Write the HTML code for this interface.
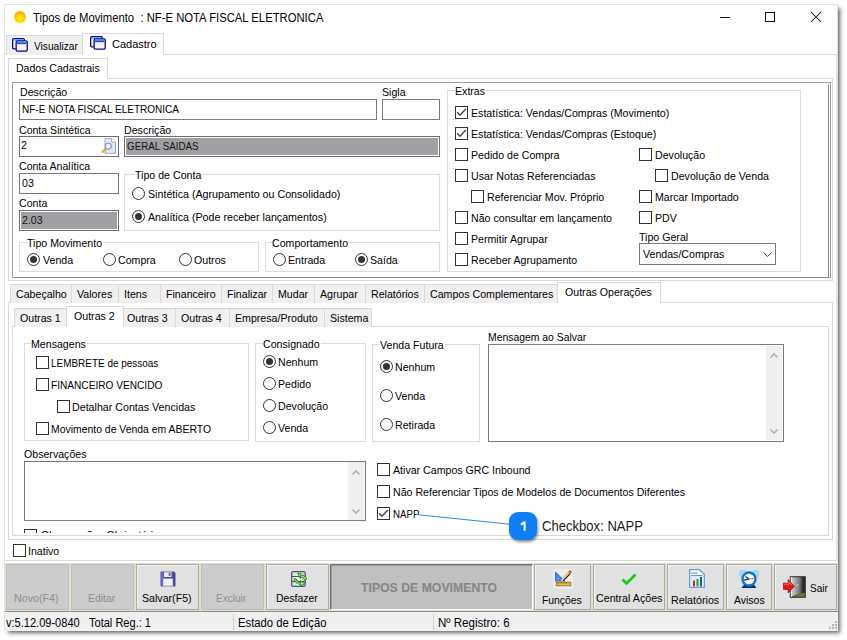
<!DOCTYPE html>
<html><head><meta charset="utf-8"><style>
*{margin:0;padding:0;box-sizing:border-box}
html,body{width:847px;height:640px;overflow:hidden;background:#fff}
body{position:relative;font-family:"Liberation Sans",sans-serif;color:#000}
.a{position:absolute}
.t{position:absolute;white-space:pre;font-size:12px;line-height:12px;transform-origin:0 0;color:#000}
.cb{position:absolute;width:13px;height:13px;border:1px solid #333;background:#fff}
.rb{position:absolute;width:13px;height:13px;border:1px solid #333;border-radius:50%;background:#fff}
.rb.on::after{content:"";position:absolute;left:2px;top:2px;width:7px;height:7px;border-radius:50%;background:#333}
</style></head><body>
<div class="a" style="left:4px;top:4px;width:834px;height:627px;border:1px solid #e2e2e2;background:#fff;box-shadow:3px 3px 4px -1px rgba(0,0,0,0.6);"></div>
<div class="a" style="left:14px;top:11px;width:12px;height:12px;border-radius:50%;background:radial-gradient(circle at 50% 65%,#fff200 0,#ffd000 40%,#ffa000 90%);"></div>
<div class="t" style="left:33px;top:12px;font-size:12px;line-height:12px;transform:scaleX(0.94);">Tipos de Movimento  : NF-E NOTA FISCAL ELETRONICA</div>
<div class="a" style="left:720px;top:17px;width:10px;height:1px;background:#111;"></div>
<div class="a" style="left:765px;top:12px;width:10px;height:10px;border:1px solid #111;"></div>
<svg class="a" style="left:810px;top:11px" width="12" height="12"><path d="M1 1 L11 11 M11 1 L1 11" stroke="#111" stroke-width="1.05"/></svg>
<div class="a" style="left:5px;top:54px;width:832px;height:1px;background:#d9d9d9;"></div>
<div class="a" style="left:836px;top:54px;width:1px;height:507px;background:#e3e3e3;"></div>
<div class="a" style="left:6px;top:35px;width:77px;height:20px;background:#f0f0f0;border:1px solid #d9d9d9;border-bottom:none;"></div>
<div class="a" style="left:82px;top:33px;width:82px;height:22px;background:#fff;border:1px solid #d9d9d9;border-bottom:none;"></div>
<div class="a" style="left:11px;top:37px"><svg width="18" height="16" viewBox="0 0 18 16"><rect x="1.65" y="1.65" width="11.7" height="10.3" rx="1.2" fill="#f4f4f4" stroke="#0a0a8a" stroke-width="1.3"/><rect x="2.4" y="2.4" width="10.2" height="1.4" fill="#4fa8ff"/><rect x="5.15" y="3.85" width="11.1" height="10.2" rx="1.2" fill="#f2f2f2" stroke="#0a0a8a" stroke-width="1.3"/><rect x="5.9" y="4.6" width="9.6" height="1.8" fill="#3a8cf5"/><rect x="5.9" y="6.3" width="9.6" height="0.8" fill="#0a0a8a"/></svg></div>
<div class="a" style="left:89px;top:35px"><svg width="18" height="16" viewBox="0 0 18 16"><rect x="1.65" y="1.65" width="11.7" height="10.3" rx="1.2" fill="#f4f4f4" stroke="#0a0a8a" stroke-width="1.3"/><rect x="2.4" y="2.4" width="10.2" height="1.4" fill="#4fa8ff"/><rect x="5.15" y="3.85" width="11.1" height="10.2" rx="1.2" fill="#f2f2f2" stroke="#0a0a8a" stroke-width="1.3"/><rect x="5.9" y="4.6" width="9.6" height="1.8" fill="#3a8cf5"/><rect x="5.9" y="6.3" width="9.6" height="0.8" fill="#0a0a8a"/></svg></div>
<div class="t" style="left:33.9px;top:41px;font-size:11px;line-height:11px;transform:scaleX(0.922);">Visualizar</div>
<div class="t" style="left:112px;top:39px;font-size:11px;line-height:11px;">Cadastro</div>
<div class="a" style="left:8px;top:78px;width:825px;height:203px;border:1px solid #d9d9d9;"></div>
<div class="a" style="left:8px;top:58px;width:100px;height:21px;background:#fff;border:1px solid #d9d9d9;border-bottom:none;"></div>
<div class="t" style="left:15.5px;top:63px;font-size:11px;line-height:11px;transform:scaleX(0.957);">Dados Cadastrais</div>
<div class="a" style="left:12px;top:82px;width:819px;height:196px;border:1px solid #a0a0a0;border-right-color:#a0a0a0;"></div>
<div class="a" style="left:828px;top:84px;width:1px;height:193px;background:#8a8a8a;"></div>
<div class="a" style="left:14px;top:277px;width:815px;height:1px;background:#8a8a8a;"></div>
<div class="t" style="left:19.5px;top:87px;font-size:11px;line-height:11px;transform:scaleX(0.965);">Descrição</div>
<div class="a" style="left:19px;top:99px;width:358px;height:21px;border:1px solid #7a7a7a;background:#fff;"></div>
<div class="t" style="left:22px;top:104px;font-size:11px;line-height:11px;transform:scaleX(0.911);">NF-E NOTA FISCAL ELETRONICA</div>
<div class="t" style="left:382px;top:87px;font-size:11px;line-height:11px;transform:scaleX(0.965);">Sigla</div>
<div class="a" style="left:382px;top:99px;width:58px;height:21px;border:1px solid #7a7a7a;background:#fff;"></div>
<div class="t" style="left:19px;top:125px;font-size:11px;line-height:11px;transform:scaleX(0.96);">Conta Sintética</div>
<div class="a" style="left:19px;top:136px;width:100px;height:21px;border:1px solid #6d6d6d;background:#fff;"></div>
<div class="t" style="left:21.2px;top:140px;font-size:11px;line-height:11px;transform:scaleX(0.965);">2</div>
<div class="a" style="left:100px;top:136px"><svg width="18" height="18" viewBox="0 0 18 18"><path d="M5 2.5 H11.5 L15.5 6 V17.3 H5 Z" fill="#dde9fb" stroke="#9a9ac8" stroke-width="0.9"/><path d="M11.5 2.5 V6 H15.5" fill="#fff" stroke="#9a9ac8" stroke-width="0.8"/><circle cx="8.3" cy="10.2" r="3" fill="#e4f6ff" stroke="#8c8cc8" stroke-width="1.1"/><path d="M6.2 12.5 L2.5 16" stroke="#f0a020" stroke-width="2" stroke-linecap="round"/></svg></div>
<div class="t" style="left:124px;top:125px;font-size:11px;line-height:11px;transform:scaleX(0.965);">Descrição</div>
<div class="a" style="left:124px;top:136px;width:316px;height:21px;background:#a0a0a4;border:1px solid #6d6d6d;box-shadow:inset 0 0 0 1px #fff;"></div>
<div class="t" style="left:126.8px;top:141px;font-size:11px;line-height:11px;transform:scaleX(0.892);color:#111;">GERAL SAIDAS</div>
<div class="t" style="left:19px;top:161px;font-size:11px;line-height:11px;transform:scaleX(0.96);">Conta Analítica</div>
<div class="a" style="left:19px;top:173px;width:100px;height:21px;border:1px solid #7a7a7a;background:#fff;"></div>
<div class="t" style="left:22px;top:178px;font-size:11px;line-height:11px;transform:scaleX(0.965);">03</div>
<div class="t" style="left:19px;top:198px;font-size:11px;line-height:11px;transform:scaleX(0.965);">Conta</div>
<div class="a" style="left:19px;top:210px;width:100px;height:21px;background:#a0a0a4;border:1px solid #6d6d6d;box-shadow:inset 0 0 0 1px #fff;"></div>
<div class="t" style="left:22px;top:215px;font-size:11px;line-height:11px;transform:scaleX(0.965);color:#111;">2.03</div>
<div class="a" style="left:124px;top:174px;width:316px;height:57px;border:1px solid #dcdcdc;"></div>
<div class="t" style="left:134.5px;top:170px;font-size:11px;line-height:11px;transform:scaleX(0.965);background:#fff;padding-right:1px;">Tipo de Conta</div>
<div class="rb" style="left:132.0px;top:187.0px"></div>
<div class="t" style="left:147.5px;top:189px;font-size:11px;line-height:11px;transform:scaleX(0.971);">Sintética (Agrupamento ou Consolidado)</div>
<div class="rb on" style="left:132.0px;top:210.0px"></div>
<div class="t" style="left:147.5px;top:212px;font-size:11px;line-height:11px;transform:scaleX(0.971);">Analítica (Pode receber lançamentos)</div>
<div class="a" style="left:19px;top:242px;width:240px;height:30px;border:1px solid #dcdcdc;"></div>
<div class="t" style="left:26.5px;top:238px;font-size:11px;line-height:11px;transform:scaleX(0.965);background:#fff;padding-right:1px;">Tipo Movimento</div>
<div class="rb on" style="left:27.0px;top:253.0px"></div>
<div class="t" style="left:43px;top:255px;font-size:11px;line-height:11px;transform:scaleX(0.965);">Venda</div>
<div class="rb" style="left:102.5px;top:253.0px"></div>
<div class="t" style="left:118px;top:255px;font-size:11px;line-height:11px;transform:scaleX(0.965);">Compra</div>
<div class="rb" style="left:178.5px;top:253.0px"></div>
<div class="t" style="left:194px;top:255px;font-size:11px;line-height:11px;transform:scaleX(0.965);">Outros</div>
<div class="a" style="left:265px;top:242px;width:175px;height:30px;border:1px solid #dcdcdc;"></div>
<div class="t" style="left:272px;top:238px;font-size:11px;line-height:11px;transform:scaleX(0.965);background:#fff;padding-right:1px;">Comportamento</div>
<div class="rb" style="left:272.5px;top:253.0px"></div>
<div class="t" style="left:288px;top:255px;font-size:11px;line-height:11px;transform:scaleX(0.965);">Entrada</div>
<div class="rb on" style="left:355.0px;top:253.0px"></div>
<div class="t" style="left:370px;top:255px;font-size:11px;line-height:11px;transform:scaleX(0.965);">Saída</div>
<div class="a" style="left:447px;top:90px;width:354px;height:182px;border:1px solid #dcdcdc;"></div>
<div class="t" style="left:455px;top:86px;font-size:11px;line-height:11px;transform:scaleX(0.965);background:#fff;padding-right:1px;">Extras</div>
<div class="cb" style="left:455px;top:106px"><svg width="11" height="11" style="position:absolute;left:0;top:0"><path d="M1.2 5.2 L4 8.2 L9.8 2" fill="none" stroke="#444" stroke-width="1.4"/></svg></div>
<div class="t" style="left:470.5px;top:108px;font-size:11px;line-height:11px;transform:scaleX(0.965);">Estatística: Vendas/Compras (Movimento)</div>
<div class="cb" style="left:455px;top:127px"><svg width="11" height="11" style="position:absolute;left:0;top:0"><path d="M1.2 5.2 L4 8.2 L9.8 2" fill="none" stroke="#444" stroke-width="1.4"/></svg></div>
<div class="t" style="left:470.5px;top:129px;font-size:11px;line-height:11px;transform:scaleX(0.965);">Estatística: Vendas/Compras (Estoque)</div>
<div class="cb" style="left:455px;top:148px"></div>
<div class="t" style="left:470.5px;top:150px;font-size:11px;line-height:11px;transform:scaleX(0.965);">Pedido de Compra</div>
<div class="cb" style="left:455px;top:169px"></div>
<div class="t" style="left:470.5px;top:171px;font-size:11px;line-height:11px;transform:scaleX(0.965);">Usar Notas Referenciadas</div>
<div class="cb" style="left:471px;top:190px"></div>
<div class="t" style="left:486.5px;top:192px;font-size:11px;line-height:11px;transform:scaleX(0.965);">Referenciar Mov. Próprio</div>
<div class="cb" style="left:455px;top:211px"></div>
<div class="t" style="left:470.5px;top:213px;font-size:11px;line-height:11px;transform:scaleX(0.965);">Não consultar em lançamento</div>
<div class="cb" style="left:455px;top:232px"></div>
<div class="t" style="left:470.5px;top:234px;font-size:11px;line-height:11px;transform:scaleX(0.965);">Permitir Agrupar</div>
<div class="cb" style="left:455px;top:253px"></div>
<div class="t" style="left:470.5px;top:255px;font-size:11px;line-height:11px;transform:scaleX(0.965);">Receber Agrupamento</div>
<div class="cb" style="left:639px;top:148px"></div>
<div class="t" style="left:654.5px;top:150px;font-size:11px;line-height:11px;transform:scaleX(0.965);">Devolução</div>
<div class="cb" style="left:655px;top:169px"></div>
<div class="t" style="left:670.5px;top:171px;font-size:11px;line-height:11px;transform:scaleX(0.965);">Devolução de Venda</div>
<div class="cb" style="left:639px;top:190px"></div>
<div class="t" style="left:654.5px;top:192px;font-size:11px;line-height:11px;transform:scaleX(0.965);">Marcar Importado</div>
<div class="cb" style="left:639px;top:211px"></div>
<div class="t" style="left:654.5px;top:213px;font-size:11px;line-height:11px;transform:scaleX(0.965);">PDV</div>
<div class="t" style="left:639px;top:232px;font-size:11px;line-height:11px;transform:scaleX(0.965);">Tipo Geral</div>
<div class="a" style="left:639px;top:243px;width:137px;height:22px;border:1px solid #7a7a7a;background:#fff;"></div>
<div class="t" style="left:643px;top:249px;font-size:11px;line-height:11px;transform:scaleX(0.965);">Vendas/Compras</div>
<svg class="a" style="left:763px;top:252px" width="9" height="6"><path d="M0.5 0.5 L4.5 4.5 L8.5 0.5" fill="none" stroke="#444" stroke-width="1"/></svg>
<div class="a" style="left:8px;top:302px;width:825px;height:238px;border:1px solid #d9d9d9;"></div>
<div class="a" style="left:10px;top:284px;width:62px;height:19px;background:#f0f0f0;border:1px solid #d9d9d9;border-bottom:none;"></div>
<div class="a" style="left:71px;top:284px;width:48px;height:19px;background:#f0f0f0;border:1px solid #d9d9d9;border-bottom:none;"></div>
<div class="a" style="left:118px;top:284px;width:43px;height:19px;background:#f0f0f0;border:1px solid #d9d9d9;border-bottom:none;"></div>
<div class="a" style="left:160px;top:284px;width:62px;height:19px;background:#f0f0f0;border:1px solid #d9d9d9;border-bottom:none;"></div>
<div class="a" style="left:221px;top:284px;width:52px;height:19px;background:#f0f0f0;border:1px solid #d9d9d9;border-bottom:none;"></div>
<div class="a" style="left:272px;top:284px;width:43px;height:19px;background:#f0f0f0;border:1px solid #d9d9d9;border-bottom:none;"></div>
<div class="a" style="left:314px;top:284px;width:52px;height:19px;background:#f0f0f0;border:1px solid #d9d9d9;border-bottom:none;"></div>
<div class="a" style="left:365px;top:284px;width:60px;height:19px;background:#f0f0f0;border:1px solid #d9d9d9;border-bottom:none;"></div>
<div class="a" style="left:424px;top:284px;width:134px;height:19px;background:#f0f0f0;border:1px solid #d9d9d9;border-bottom:none;"></div>
<div class="t" style="left:16px;top:289px;font-size:11px;line-height:11px;transform:scaleX(0.965);">Cabeçalho</div>
<div class="t" style="left:77px;top:289px;font-size:11px;line-height:11px;transform:scaleX(0.965);">Valores</div>
<div class="t" style="left:124px;top:289px;font-size:11px;line-height:11px;transform:scaleX(0.965);">Itens</div>
<div class="t" style="left:166px;top:289px;font-size:11px;line-height:11px;transform:scaleX(0.965);">Financeiro</div>
<div class="t" style="left:227px;top:289px;font-size:11px;line-height:11px;transform:scaleX(0.965);">Finalizar</div>
<div class="t" style="left:278px;top:289px;font-size:11px;line-height:11px;transform:scaleX(0.965);">Mudar</div>
<div class="t" style="left:320px;top:289px;font-size:11px;line-height:11px;transform:scaleX(0.965);">Agrupar</div>
<div class="t" style="left:371px;top:289px;font-size:11px;line-height:11px;transform:scaleX(0.965);">Relatórios</div>
<div class="t" style="left:430px;top:289px;font-size:11px;line-height:11px;transform:scaleX(0.965);">Campos Complementares</div>
<div class="a" style="left:557px;top:282px;width:104px;height:21px;background:#fff;border:1px solid #d9d9d9;border-bottom:none;"></div>
<div class="t" style="left:564.5px;top:287px;font-size:11px;line-height:11px;transform:scaleX(0.965);">Outras Operações</div>
<div class="a" style="left:12px;top:326px;width:817px;height:210px;border:1px solid #d9d9d9;"></div>
<div class="a" style="left:14px;top:308px;width:53px;height:19px;background:#f0f0f0;border:1px solid #d9d9d9;border-bottom:none;"></div>
<div class="t" style="left:19.5px;top:313px;font-size:11px;line-height:11px;transform:scaleX(0.965);">Outras 1</div>
<div class="a" style="left:121px;top:308px;width:55px;height:19px;background:#f0f0f0;border:1px solid #d9d9d9;border-bottom:none;"></div>
<div class="t" style="left:127px;top:313px;font-size:11px;line-height:11px;transform:scaleX(0.965);">Outras 3</div>
<div class="a" style="left:175px;top:308px;width:55px;height:19px;background:#f0f0f0;border:1px solid #d9d9d9;border-bottom:none;"></div>
<div class="t" style="left:181px;top:313px;font-size:11px;line-height:11px;transform:scaleX(0.965);">Outras 4</div>
<div class="a" style="left:229px;top:308px;width:96px;height:19px;background:#f0f0f0;border:1px solid #d9d9d9;border-bottom:none;"></div>
<div class="t" style="left:235px;top:313px;font-size:11px;line-height:11px;transform:scaleX(0.965);">Empresa/Produto</div>
<div class="a" style="left:324px;top:308px;width:48px;height:19px;background:#f0f0f0;border:1px solid #d9d9d9;border-bottom:none;"></div>
<div class="t" style="left:330px;top:313px;font-size:11px;line-height:11px;transform:scaleX(0.965);">Sistema</div>
<div class="a" style="left:66px;top:306px;width:58px;height:21px;background:#fff;border:1px solid #d9d9d9;border-bottom:none;"></div>
<div class="t" style="left:74px;top:311px;font-size:11px;line-height:11px;transform:scaleX(0.965);">Outras 2</div>
<div class="a" style="left:24px;top:343px;width:225px;height:98px;border:1px solid #dcdcdc;"></div>
<div class="t" style="left:31px;top:339px;font-size:11px;line-height:11px;transform:scaleX(0.965);background:#fff;padding-right:1px;">Mensagens</div>
<div class="cb" style="left:36px;top:356px"></div>
<div class="t" style="left:50.8px;top:358px;font-size:11px;line-height:11px;transform:scaleX(0.905);">LEMBRETE de pessoas</div>
<div class="cb" style="left:36px;top:378px"></div>
<div class="t" style="left:50.8px;top:380px;font-size:11px;line-height:11px;transform:scaleX(0.92);">FINANCEIRO VENCIDO</div>
<div class="cb" style="left:57px;top:400px"></div>
<div class="t" style="left:71.8px;top:402px;font-size:11px;line-height:11px;transform:scaleX(0.97);">Detalhar Contas Vencidas</div>
<div class="cb" style="left:36px;top:422px"></div>
<div class="t" style="left:50.8px;top:424px;font-size:11px;line-height:11px;transform:scaleX(0.947);">Movimento de Venda em ABERTO</div>
<div class="a" style="left:255px;top:343px;width:111px;height:99px;border:1px solid #dcdcdc;"></div>
<div class="t" style="left:263px;top:339px;font-size:11px;line-height:11px;transform:scaleX(0.965);background:#fff;padding-right:1px;">Consignado</div>
<div class="rb on" style="left:263.0px;top:355.0px"></div>
<div class="t" style="left:277.7px;top:357px;font-size:11px;line-height:11px;transform:scaleX(0.965);">Nenhum</div>
<div class="rb" style="left:263.0px;top:377.0px"></div>
<div class="t" style="left:277.7px;top:379px;font-size:11px;line-height:11px;transform:scaleX(0.965);">Pedido</div>
<div class="rb" style="left:263.0px;top:399.0px"></div>
<div class="t" style="left:277.7px;top:401px;font-size:11px;line-height:11px;transform:scaleX(0.965);">Devolução</div>
<div class="rb" style="left:263.0px;top:421.0px"></div>
<div class="t" style="left:277.7px;top:423px;font-size:11px;line-height:11px;transform:scaleX(0.965);">Venda</div>
<div class="a" style="left:372px;top:344px;width:108px;height:98px;border:1px solid #dcdcdc;"></div>
<div class="t" style="left:380px;top:340px;font-size:11px;line-height:11px;transform:scaleX(0.965);background:#fff;padding-right:1px;">Venda Futura</div>
<div class="rb on" style="left:380.0px;top:360.0px"></div>
<div class="t" style="left:395px;top:362px;font-size:11px;line-height:11px;transform:scaleX(0.965);">Nenhum</div>
<div class="rb" style="left:380.0px;top:389.0px"></div>
<div class="t" style="left:395px;top:391px;font-size:11px;line-height:11px;transform:scaleX(0.965);">Venda</div>
<div class="rb" style="left:380.0px;top:418.0px"></div>
<div class="t" style="left:395px;top:420px;font-size:11px;line-height:11px;transform:scaleX(0.965);">Retirada</div>
<div class="t" style="left:487.8px;top:332px;font-size:11px;line-height:11px;transform:scaleX(0.945);">Mensagem ao Salvar</div>
<div class="a" style="left:488px;top:344px;width:296px;height:98px;border:1px solid #7a7a7a;background:#fff;"></div>
<div class="a" style="left:766px;top:346px;width:16px;height:94px;background:#f0f0f0;"></div>
<svg class="a" style="left:770px;top:353px" width="8" height="5"><path d="M0.5 4.5 L4 1 L7.5 4.5" fill="none" stroke="#b0b0b0" stroke-width="1.6"/></svg>
<svg class="a" style="left:770px;top:429px" width="8" height="5"><path d="M0.5 0.5 L4 4 L7.5 0.5" fill="none" stroke="#b0b0b0" stroke-width="1.6"/></svg>
<div class="t" style="left:24px;top:449px;font-size:11px;line-height:11px;transform:scaleX(0.965);">Observações</div>
<div class="a" style="left:24px;top:461px;width:342px;height:60px;border:1px solid #7a7a7a;background:#fff;"></div>
<div class="a" style="left:348px;top:462px;width:16px;height:58px;background:#f0f0f0;"></div>
<svg class="a" style="left:352px;top:470px" width="8" height="5"><path d="M0.5 4.5 L4 1 L7.5 4.5" fill="none" stroke="#b0b0b0" stroke-width="1.6"/></svg>
<svg class="a" style="left:352px;top:509px" width="8" height="5"><path d="M0.5 0.5 L4 4 L7.5 0.5" fill="none" stroke="#b0b0b0" stroke-width="1.6"/></svg>
<div class="cb" style="left:377px;top:463px"></div>
<div class="t" style="left:392.5px;top:465px;font-size:11px;line-height:11px;transform:scaleX(0.965);">Ativar Campos GRC Inbound</div>
<div class="cb" style="left:377px;top:485px"></div>
<div class="t" style="left:392.5px;top:487px;font-size:11px;line-height:11px;transform:scaleX(0.965);">Não Referenciar Tipos de Modelos de Documentos Diferentes</div>
<div class="cb" style="left:377px;top:507px"><svg width="11" height="11" style="position:absolute;left:0;top:0"><path d="M1.2 5.2 L4 8.2 L9.8 2" fill="none" stroke="#444" stroke-width="1.4"/></svg></div>
<div class="t" style="left:392.5px;top:509px;font-size:11px;line-height:11px;transform:scaleX(0.88);">NAPP</div>
<div class="a" style="left:13px;top:520px;width:815px;height:13px;overflow:hidden"><div class="cb" style="left:11px;top:9px"></div><div class="t" style="left:28px;top:10px;font-size:11px;line-height:11px;transform:scaleX(0.965)">Observações Obrigatórias</div></div>
<div class="cb" style="left:13px;top:544px"></div>
<div class="t" style="left:28px;top:546px;font-size:11px;line-height:11px;transform:scaleX(0.965);">Inativo</div>
<svg class="a" style="left:0;top:0" width="847" height="640"><line x1="416" y1="514.5" x2="512" y2="524.5" stroke="#2b8be8" stroke-width="1.1"/></svg>
<div class="a" style="left:509px;top:512px;width:28px;height:28px;border-radius:9px;background:#0f7ff5;box-shadow:1px 2px 3px rgba(0,0,0,0.45);"></div>
<svg class="a" style="left:515px;top:516px" width="16" height="20"><path d="M6 8.6 L9.6 6 V14.7" fill="none" stroke="#fff" stroke-width="2" stroke-linejoin="round"/></svg>
<div class="t" style="left:542px;top:519px;font-size:14px;line-height:14px;transform:scaleX(0.934);color:#1a1a1a;">Checkbox: NAPP</div>
<div class="a" style="left:5px;top:560px;width:832px;height:1px;background:#d9d9d9;"></div>
<div class="a" style="left:5px;top:563px;width:833px;height:48px;background:#e3e1c3;"></div>
<div class="a" style="left:5px;top:611px;width:833px;height:1px;background:#8c8c8c;"></div>
<div class="a" style="left:6px;top:564px;width:63px;height:46px;background:#cccccc;border:1px solid #bebebe;"></div>
<div class="a" style="left:71px;top:564px;width:63px;height:46px;background:#cccccc;border:1px solid #bebebe;"></div>
<div class="a" style="left:136px;top:564px;width:63px;height:46px;background:#e1e1e1;border:1px solid #a9a9a9;box-shadow:inset 1px 1px 0 #f2f2f2;"></div>
<div class="a" style="left:201px;top:564px;width:63px;height:46px;background:#cccccc;border:1px solid #bebebe;"></div>
<div class="a" style="left:266px;top:564px;width:63px;height:46px;background:#e1e1e1;border:1px solid #a9a9a9;box-shadow:inset 1px 1px 0 #f2f2f2;"></div>
<div class="a" style="left:534px;top:564px;width:57px;height:46px;background:#e1e1e1;border:1px solid #a9a9a9;box-shadow:inset 1px 1px 0 #f2f2f2;"></div>
<div class="a" style="left:593px;top:564px;width:72px;height:46px;background:#e1e1e1;border:1px solid #a9a9a9;box-shadow:inset 1px 1px 0 #f2f2f2;"></div>
<div class="a" style="left:667px;top:564px;width:57px;height:46px;background:#e1e1e1;border:1px solid #a9a9a9;box-shadow:inset 1px 1px 0 #f2f2f2;"></div>
<div class="a" style="left:726px;top:564px;width:46px;height:46px;background:#e1e1e1;border:1px solid #a9a9a9;box-shadow:inset 1px 1px 0 #f2f2f2;"></div>
<div class="a" style="left:774px;top:564px;width:63px;height:46px;background:#e1e1e1;border:1px solid #a9a9a9;box-shadow:inset 1px 1px 0 #f2f2f2;"></div>
<div class="a" style="left:330px;top:564px;width:203px;height:46px;background:#c0c0c0;border:1px solid #707070;border-right-color:#fff;border-bottom-color:#fff;box-shadow:inset 1px 1px 0 #9a9a9a;"></div>
<div class="t" style="left:361.3px;top:582px;font-size:12px;line-height:12px;transform:scaleX(1.022);color:#858585;font-weight:bold;">TIPOS DE MOVIMENTO</div>
<div class="t" style="left:14.3px;top:593px;font-size:11px;line-height:11px;transform:scaleX(0.97);color:#8d8d8d;">Novo(F4)</div>
<div class="t" style="left:88.3px;top:593px;font-size:11px;line-height:11px;transform:scaleX(0.95);color:#8d8d8d;">Editar</div>
<div class="t" style="left:142.3px;top:593px;font-size:11px;line-height:11px;transform:scaleX(0.966);color:#000;">Salvar(F5)</div>
<div class="t" style="left:216.3px;top:593px;font-size:11px;line-height:11px;transform:scaleX(0.915);color:#8d8d8d;">Excluir</div>
<div class="t" style="left:275.8px;top:593px;font-size:11px;line-height:11px;transform:scaleX(0.95);color:#000;">Desfazer</div>
<div class="t" style="left:542px;top:595px;font-size:11px;line-height:11px;transform:scaleX(0.943);">Funções</div>
<div class="t" style="left:595.5px;top:593px;font-size:11px;line-height:11px;transform:scaleX(0.97);">Central Ações</div>
<div class="t" style="left:671px;top:595px;font-size:11px;line-height:11px;transform:scaleX(0.973);">Relatórios</div>
<div class="t" style="left:733.5px;top:595px;font-size:11px;line-height:11px;transform:scaleX(0.953);">Avisos</div>
<div class="t" style="left:810px;top:583px;font-size:11px;line-height:11px;transform:scaleX(0.91);">Sair</div>
<div class="a" style="left:160px;top:571px"><svg width="16" height="16" viewBox="0 0 16 16"><path d="M0.5 1.5 Q0.5 0.5 1.5 0.5 H14 L15.5 2 V14.5 Q15.5 15.5 14.5 15.5 H1.5 Q0.5 15.5 0.5 14.5 Z" fill="#4a4a9c"/><rect x="1.3" y="1" width="2.2" height="14" fill="#6a6ac8"/><rect x="4" y="0.5" width="7.5" height="5.5" fill="#ededed"/><rect x="4" y="0.5" width="7.5" height="0.8" fill="#8a8a8a"/><rect x="8.8" y="1.8" width="1.6" height="3" fill="#4a4a9c"/><rect x="3.2" y="7.6" width="9.6" height="7.9" fill="#f0f0f0"/><rect x="3.2" y="14.7" width="9.6" height="0.8" fill="#9a9a9a"/></svg></div>
<div class="a" style="left:291px;top:571px"><svg width="16" height="16" viewBox="0 0 16 16"><defs><linearGradient id="dg" x1="0" x2="1"><stop offset="0" stop-color="#c8d4e0"/><stop offset="0.5" stop-color="#f4f8fc"/><stop offset="1" stop-color="#b8c6d4"/></linearGradient></defs><rect x="0.6" y="0.6" width="13.6" height="14.8" rx="1.5" fill="url(#dg)" stroke="#46566c" stroke-width="1.2"/><path d="M0.6 5.5 H14.2 M0.6 10.5 H14.2" stroke="#46566c" stroke-width="1.1"/><path d="M9 5 Q12 4.5 14.5 7.5" fill="none" stroke="#1a7a1a" stroke-width="2.8" stroke-linecap="round"/><path d="M9 5 Q12 4.5 14.5 7.5" fill="none" stroke="#c8f070" stroke-width="1.3" stroke-linecap="round"/><path d="M6.5 2 L10 2.5 L9.5 7.5 Z" fill="#c8f070" stroke="#1a7a1a" stroke-width="0.9"/><path d="M4.2 8.8 Q6.5 12.5 10 12.5" fill="none" stroke="#1a7a1a" stroke-width="2.8" stroke-linecap="round"/><path d="M4.2 8.8 Q6.5 12.5 10 12.5" fill="none" stroke="#8ee840" stroke-width="1.3" stroke-linecap="round"/><path d="M13.5 12.5 L9.5 9.8 L9.8 15 Z" fill="#d8f870" stroke="#1a7a1a" stroke-width="0.9"/></svg></div>
<div class="a" style="left:553px;top:569px"><svg width="20" height="20" viewBox="0 0 20 20"><rect x="0" y="0" width="20" height="20" fill="#eeeee8"/><path d="M2 2 L2 12.6 L12.7 12.6 Z" fill="#3a70e0"/><path d="M3.2 5 L3.2 11.4 L9.6 11.4 Z" fill="#5a90f0"/><path d="M4.5 8.2 L4.5 10.6 L6.9 10.6 Z" fill="#0a2a8a"/><circle cx="5.2" cy="9.8" r="0.7" fill="#fff"/><rect x="3.2" y="13.2" width="14.6" height="3.6" fill="#f2b848" stroke="#8a6a00" stroke-width="0.8"/><path d="M5 13.6 V14.8 M7 13.6 V14.8 M9 13.6 V14.8 M11 13.6 V14.8 M13 13.6 V14.8 M15 13.6 V14.8" stroke="#6a5000" stroke-width="0.6"/><path d="M9.6 11 L16.4 4.2" stroke="#111" stroke-width="3"/><path d="M9.2 10.6 L16 3.8" stroke="#f0dc80" stroke-width="1.8"/><circle cx="17.2" cy="3" r="1.7" fill="#d06050"/><path d="M8.6 11.6 L9.8 10.2" stroke="#fff" stroke-width="1.3"/></svg></div>
<svg class="a" style="left:621px;top:573px" width="16" height="13"><path d="M1.5 6.5 L5.5 10.5 L14.5 1.5" fill="none" stroke="#1cc41c" stroke-width="2.6"/></svg>
<div class="a" style="left:689px;top:569px"><svg width="16" height="19" viewBox="0 0 16 19"><path d="M0.7 0.7 H10.5 L15.3 5.5 V18.3 H0.7 Z" fill="#fff" stroke="#6a9ad8" stroke-width="1.3"/><rect x="2" y="3.5" width="6.5" height="1.2" fill="#6a9ad8"/><rect x="2" y="6" width="11.5" height="1.2" fill="#6a9ad8"/><rect x="2" y="8" width="11.5" height="9" fill="#dcefff"/><rect x="4" y="11.5" width="2" height="6" fill="#e02020"/><rect x="7.5" y="10" width="2" height="7.5" fill="#20a030"/><rect x="11" y="8" width="2" height="9.5" fill="#1a5aa0"/></svg></div>
<div class="a" style="left:738px;top:569px"><svg width="22" height="20" viewBox="0 0 22 20"><circle cx="4.6" cy="4.6" r="3.8" fill="#9adcf4"/><circle cx="17.4" cy="4.6" r="3.8" fill="#9adcf4"/><path d="M3.5 19 L6.5 15 H15.5 L18.5 19 Z" fill="#0a2e6e"/><circle cx="11" cy="10" r="6.5" fill="#fbfdff" stroke="#1874c4" stroke-width="2.4"/><path d="M11 10.2 L7.6 7.6 M11 10.2 L5.8 11.2" stroke="#13336a" stroke-width="1.3"/><path d="M11 10.2 L16 9.2" stroke="#e06868" stroke-width="1"/></svg></div>
<div class="a" style="left:783px;top:576px"><svg width="26" height="24" viewBox="0 0 26 24"><defs><linearGradient id="sg" x1="0" x2="1"><stop offset="0" stop-color="#d8d8d8"/><stop offset="1" stop-color="#6a6a6a"/></linearGradient><linearGradient id="sd" x1="0" x2="1"><stop offset="0" stop-color="#505050"/><stop offset="1" stop-color="#1e1e1e"/></linearGradient></defs><rect x="6.8" y="0.2" width="16" height="21.6" fill="#262a2c"/><rect x="17.5" y="1.2" width="4.3" height="19.6" fill="url(#sd)"/><path d="M7.8 1.2 H17.8 V17.5 L7.8 20.8 Z" fill="url(#sg)"/><rect x="7.8" y="1.2" width="1.2" height="19.6" fill="#f4f4f4"/><path d="M9 20.8 L21.8 16.5 V20.8 Z" fill="#6c7c2c"/><circle cx="14.5" cy="9" r="0.8" fill="#eee"/><path d="M0.3 7.2 H5.2 V3.6 L11.3 10.3 L5.2 17 V13.4 H0.3 Z" fill="#e41818" stroke="#9a0000" stroke-width="0.7"/><path d="M1.2 8.3 H6 V6 L9 9.3" fill="none" stroke="#ff8080" stroke-width="0.8"/></svg></div>
<div class="a" style="left:5px;top:612px;width:833px;height:19px;background:#f0f0f0;"></div>
<div class="t" style="left:6px;top:617px;font-size:12px;line-height:12px;transform:scaleX(0.92);">v:5.12.09-0840</div>
<div class="t" style="left:89.4px;top:617px;font-size:12px;line-height:12px;transform:scaleX(0.92);">Total Reg.: 1</div>
<div class="a" style="left:233px;top:614px;width:1px;height:16px;background:#d0d0d0;"></div>
<div class="t" style="left:238.4px;top:617px;font-size:12px;line-height:12px;transform:scaleX(0.94);">Estado de Edição</div>
<div class="a" style="left:433px;top:614px;width:1px;height:16px;background:#d0d0d0;"></div>
<div class="t" style="left:438.4px;top:617px;font-size:12px;line-height:12px;transform:scaleX(0.962);">Nº Registro: 6</div>
<div class="a" style="left:835px;top:621px;width:2px;height:2px;background:#b4b4b4;"></div>
<div class="a" style="left:832px;top:624px;width:2px;height:2px;background:#b4b4b4;"></div>
<div class="a" style="left:835px;top:624px;width:2px;height:2px;background:#b4b4b4;"></div>
<div class="a" style="left:829px;top:627px;width:2px;height:2px;background:#b4b4b4;"></div>
<div class="a" style="left:832px;top:627px;width:2px;height:2px;background:#b4b4b4;"></div>
<div class="a" style="left:835px;top:627px;width:2px;height:2px;background:#b4b4b4;"></div>
</body></html>
